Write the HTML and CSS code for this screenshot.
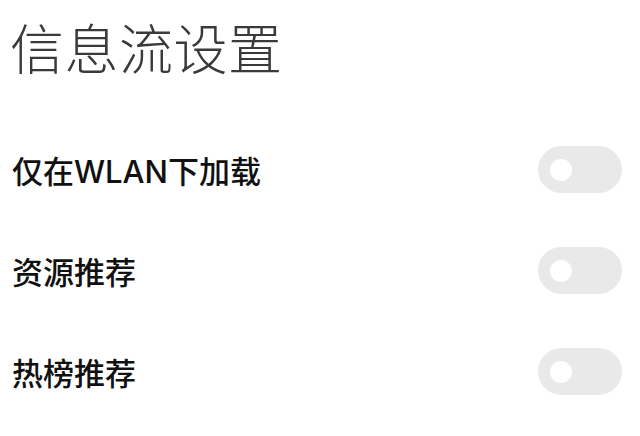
FILE: index.html
```html
<!DOCTYPE html>
<html lang="zh">
<head>
<meta charset="utf-8">
<link rel="stylesheet" href="styles.css">
</head>
<body>
<div class="page">
  <h1 class="title">信息流设置</h1>
  <div class="list">
    <div class="row">
      <span class="label">仅在WLAN下加载</span>
      <span class="switch"><span class="knob"></span></span>
    </div>
    <div class="row">
      <span class="label">资源推荐</span>
      <span class="switch"><span class="knob"></span></span>
    </div>
    <div class="row">
      <span class="label">热榜推荐</span>
      <span class="switch"><span class="knob"></span></span>
    </div>
  </div>
</div>
</body>
</html>
```
FILE: styles.css
```css
html, body {
  margin: 0;
  padding: 0;
  background: #ffffff;
}
body {
  font-family: "Noto Sans CJK SC", "Noto Sans", sans-serif;
}
.page {
  width: 640px;
  height: 436px;
  box-sizing: border-box;
  padding: 0 18px 0 10px;
  overflow: hidden;
}
.title {
  margin: 0;
  padding-top: 12px;
  font-size: 54px;
  line-height: 70px;
  font-weight: 300;
  color: #3a3a3a;
  letter-spacing: 0.5px;
}
.list {
  display: flex;
  flex-direction: column;
  gap: 54px;
  margin-top: 64px;
}
.row {
  display: flex;
  align-items: center;
  justify-content: space-between;
  height: 47px;
}
.label {
  font-family: "Inter", "Noto Sans CJK SC", sans-serif;
  font-size: 31px;
  font-weight: 500;
  color: #111111;
  padding-left: 2px;
}
.latin {
  letter-spacing: 0.5px;
}
.switch {
  width: 84px;
  height: 47px;
  border-radius: 24px;
  background: #e9e9e9;
  display: flex;
  align-items: center;
  padding-left: 12px;
  box-sizing: border-box;
}
.knob {
  width: 22px;
  height: 22px;
  border-radius: 50%;
  background: #ffffff;
}
```
